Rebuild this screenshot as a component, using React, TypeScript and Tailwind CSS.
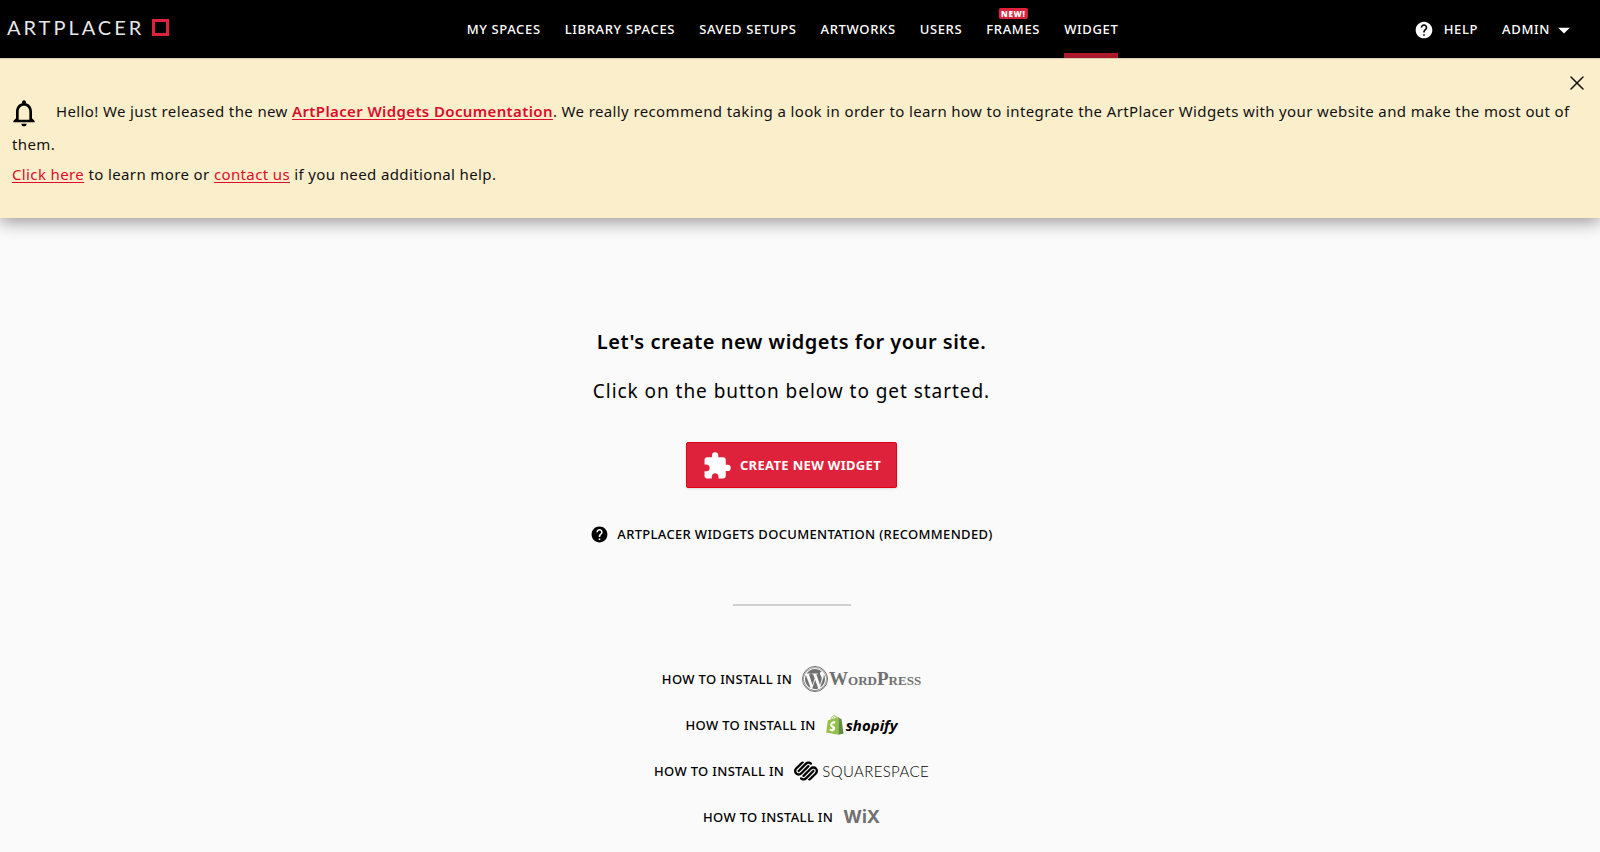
import type { ReactNode } from "react";
import { X } from "lucide-react";
import { FaWordpress } from "react-icons/fa";
import { MdArrowDropDown, MdExtension, MdHelp, MdNotificationsNone } from "react-icons/md";
import { SiSquarespace } from "react-icons/si";

type NavItem = { label: string; badge?: string; active?: boolean };

const navItems: NavItem[] = [
  { label: "MY SPACES" },
  { label: "LIBRARY SPACES" },
  { label: "SAVED SETUPS" },
  { label: "ARTWORKS" },
  { label: "USERS" },
  { label: "FRAMES", badge: "NEW!" },
  { label: "WIDGET", active: true },
];

function Header() {
  return (
    <header className="flex h-[58px] items-stretch bg-black pr-4 text-[13px] font-medium tracking-wider text-white">
      <a href="#" className="flex flex-1 items-center gap-2 pb-1 pl-[7px]">
        <span className="font-['Lato'] text-xl font-normal tracking-[3px] text-gray-200">ARTPLACER</span>
        <span className="size-[17px] border-3 border-[#df223b]" />
      </a>
      <nav className="flex gap-6">
        {navItems.map((item) => (
          <a key={item.label} href="#" className="relative flex items-center pt-0.5">
            {item.label}
            {item.badge && (
              <span className="absolute top-2 left-1/2 -translate-x-1/2 rounded-xs bg-[#df223b] px-0.5 text-[8px] leading-[11px] font-black">
                {item.badge}
              </span>
            )}
            {item.active && <span className="absolute inset-x-0 bottom-0 h-[5px] bg-[#bd1c30]" />}
          </a>
        ))}
      </nav>
      <div className="flex flex-1 items-center justify-end gap-6 pt-0.5 pr-1.5">
        <a href="#" className="flex items-center gap-2.5">
          <MdHelp className="size-5" />
          HELP
        </a>
        <button type="button" className="flex items-center">
          ADMIN
          <MdArrowDropDown className="size-7" />
        </button>
      </div>
    </header>
  );
}

function Banner() {
  const link = "text-[#dc0c2c] underline underline-offset-2";
  return (
    <section className="relative border-t border-[#d9cfb0] bg-[#fbeecb] px-3 pt-[37px] pb-[29px] text-[15px] leading-[30px] tracking-wide text-[#111] shadow-[0_4px_16px_rgba(0,0,0,0.4)]">
      <p>
        <MdNotificationsNone className="mr-4 -ml-1 inline-block size-8 text-black" />
        Hello! We just released the new{" "}
        <a href="#" className={`${link} font-semibold`}>
          ArtPlacer Widgets Documentation
        </a>
        . We really recommend taking a look in order to learn how to integrate the ArtPlacer Widgets with your website
        and make the most out of them.
      </p>
      <p>
        <a href="#" className={link}>
          Click here
        </a>{" "}
        to learn more or{" "}
        <a href="#" className={link}>
          contact us
        </a>{" "}
        if you need additional help.
      </p>
      <button type="button" aria-label="Close" className="absolute top-3 right-[11px]">
        <X className="size-6" strokeWidth={1.5} />
      </button>
    </section>
  );
}

function InstallLink({ children }: { children: ReactNode }) {
  return (
    <a href="#" className="flex h-[46px] items-center gap-2.5">
      <span>HOW TO INSTALL IN</span>
      {children}
    </a>
  );
}

function WordPressLogo() {
  return (
    <span className="flex items-center gap-px text-[#707070]">
      <span className="flex size-[26px] items-center justify-center rounded-full border border-[#707070]">
        <FaWordpress className="size-6 shrink-0" />
      </span>
      <span className="font-['Liberation_Serif'] text-[19px] font-bold tracking-normal [font-variant-caps:small-caps]">
        WordPress
      </span>
    </span>
  );
}

function ShopifyLogo() {
  return (
    <span className="flex items-center gap-0.5 text-black">
      <svg viewBox="0 0 110 125" className="h-5 w-[18px]" aria-hidden="true">
        <path d="M28 32C31 14 42 4 50 4c9 0 13 9 13 22M40 28C44 14 52 8 58 8c6 0 9 5 11 12" fill="none" stroke="#95bf47" strokeWidth="5" />
        <path d="M9.500 37.500c.4-3.300.5-3.400 4-4.500L74.700 14.500l1.700-.1V124.100L0 110z" fill="#95bf47" />
        <path
          d="M94.800 22.900c-.5 0-9.300-.2-9.300-.2s-7.400-7.200-8.100-7.900c-.3-.3-.6-.4-1-.5V124l32.800-8.100S95.800 25.400 95.700 24.800c0-1.500-.5-1.900-.9-1.900z"
          fill="#5e8e3e"
        />
        <path
          d="M58 39.900l-3.800 14.300s-4.300-1.900-9.300-1.600c-7.400.5-7.500 5.200-7.400 6.300.4 6.400 17.300 7.800 18.300 22.900.7 11.900-6.300 20-16.400 20.600-12.200.8-18.900-6.400-18.900-6.400l2.600-11s6.700 5.100 12.100 4.700c3.500-.2 4.800-3.100 4.700-5.100-.5-8.400-14.300-7.900-15.200-21.700-.8-11.400 6.800-23.200 23.600-24.200 6.500-.5 9.700 1.200 9.700 1.200z"
          fill="#fff"
        />
      </svg>
      <span className="font-['Open_Sans'] text-[15px] font-bold tracking-normal italic">shopify</span>
    </span>
  );
}

function SquarespaceLogo() {
  return (
    <span className="flex items-center gap-1 text-black">
      <SiSquarespace className="size-6" />
      <span className="font-['Lato'] text-[15px] font-light tracking-wide text-black">SQUARESPACE</span>
    </span>
  );
}

function WixLogo() {
  return <span className="font-['Inter'] text-lg font-bold tracking-normal text-[#707070]">WiX</span>;
}

export default function App() {
  return (
    <div className="min-h-screen bg-[#fafafa] font-['Noto_Sans',sans-serif] text-black">
      <Header />
      <Banner />
      <main className="flex flex-col items-center pt-[108px] pr-[17px]">
        <h1 className="text-xl leading-8 font-semibold tracking-wide">Let's create new widgets for your site.</h1>
        <p className="mt-[17px] text-[19px] leading-8 tracking-wider">Click on the button below to get started.</p>
        <button
          type="button"
          className="mt-[35px] flex h-[46px] items-center gap-2 rounded-xs border border-[#e00018] bg-[#df223b] px-[15px] pt-0.5 text-[13px] font-bold tracking-wide text-white shadow-sm"
        >
          <MdExtension className="size-[30px]" />
          CREATE NEW WIDGET
        </button>
        <a href="#" className="mt-[37px] flex items-center gap-2 text-[13px] font-medium tracking-wide">
          <MdHelp className="size-[19px]" />
          ARTPLACER WIDGETS DOCUMENTATION (RECOMMENDED)
        </a>
        <hr className="mt-[60px] mb-[50px] w-[118px] border-t-2 border-[#d0d0d0]" />
        <div className="flex flex-col items-center text-[13px] font-medium tracking-wide">
          <InstallLink>
            <WordPressLogo />
          </InstallLink>
          <InstallLink>
            <ShopifyLogo />
          </InstallLink>
          <InstallLink>
            <SquarespaceLogo />
          </InstallLink>
          <InstallLink>
            <WixLogo />
          </InstallLink>
        </div>
      </main>
    </div>
  );
}
